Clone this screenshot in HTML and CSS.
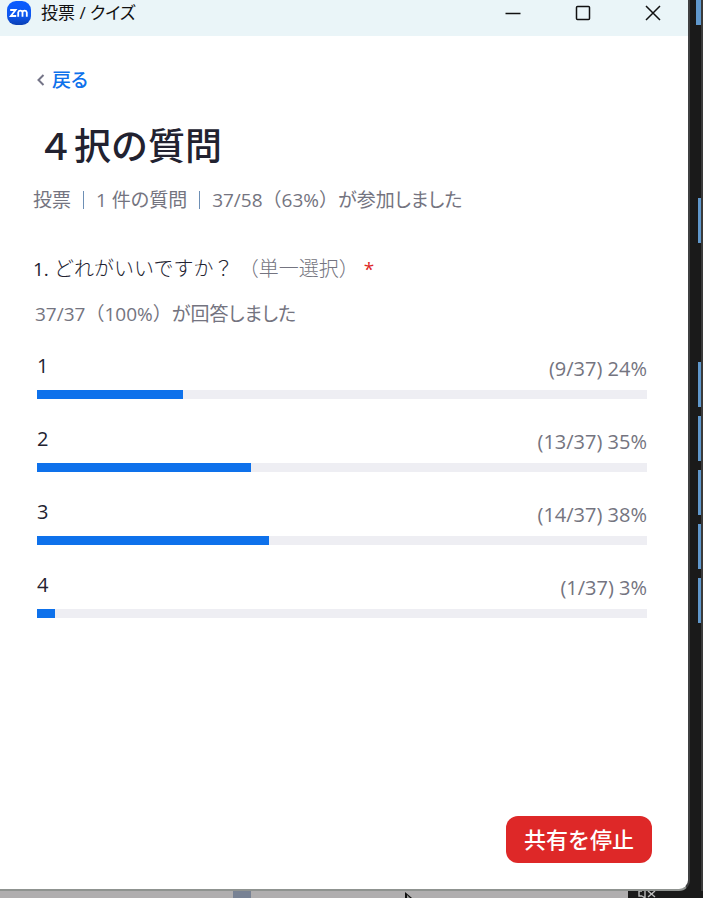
FILE: index.html
```html
<!DOCTYPE html>
<html lang="ja">
<head>
    <meta charset="UTF-8">
    <meta name="viewport" content="width=device-width, initial-scale=1.0">
    <title>投票 / クイズ</title>
    <link rel="stylesheet" href="styles.css">
</head>
<body>
    <div class="window">
        <header class="titlebar">
            <svg class="logo" viewBox="0 0 24 24" aria-hidden="true">
                <defs>
                    <linearGradient id="logo-bg" x1="0" y1="0" x2="0" y2="1">
                        <stop offset="0" stop-color="#0b5cff"/>
                        <stop offset="0.6" stop-color="#0d57f0"/>
                        <stop offset="1" stop-color="#0a3fb4"/>
                    </linearGradient>
                </defs>
                <rect width="24" height="24" rx="9" fill="url(#logo-bg)"/>
                <path d="M3.2 9h5.4L3.8 15h5.4M11.2 15.8v-4.4a2.2 2.2 0 0 1 4.3 0v4.4M15.5 11.4a2.2 2.2 0 0 1 4.3 0v4.4" fill="none" stroke="#fff" stroke-width="1.8"/>
            </svg>
            <span class="window-title">投票 / クイズ</span>
            <div class="window-buttons">
                <button type="button" aria-label="最小化">
                    <svg viewBox="0 0 16 16"><path d="M0.5 8.5h15"/></svg>
                </button>
                <button type="button" aria-label="最大化">
                    <svg viewBox="0 0 16 16"><rect x="1.5" y="1.5" width="13" height="13" rx="1"/></svg>
                </button>
                <button type="button" aria-label="閉じる">
                    <svg viewBox="0 0 16 16"><path d="M1 1l14 14M15 1L1 15"/></svg>
                </button>
            </div>
        </header>

        <main class="content">
            <a class="back" href="#">
                <svg viewBox="0 0 8 12" aria-hidden="true"><path d="M6.5 1L1.5 6l5 5"/></svg>
                戻る
            </a>
            <h1>４択の質問</h1>
            <div class="meta">
                <span>投票</span>
                <span>1 件の質問</span>
                <span>37/58<b>（</b>63%<b>）</b>が参加しました</span>
            </div>

            <section class="question">
                <h2><span class="number">1.</span> どれがいいですか？ <span class="type">（単一選択）</span> <span class="required">*</span></h2>
                <p class="answered">37/37<b>（</b>100%<b>）</b>が回答しました</p>
                <ul class="answers">
                    <li>
                        <div class="row"><span class="label">1</span><span class="count">(9/37) 24%</span></div>
                        <div class="bar"><div class="fill" style="width: 24%"></div></div>
                    </li>
                    <li>
                        <div class="row"><span class="label">2</span><span class="count">(13/37) 35%</span></div>
                        <div class="bar"><div class="fill" style="width: 35%"></div></div>
                    </li>
                    <li>
                        <div class="row"><span class="label">3</span><span class="count">(14/37) 38%</span></div>
                        <div class="bar"><div class="fill" style="width: 38%"></div></div>
                    </li>
                    <li>
                        <div class="row"><span class="label">4</span><span class="count">(1/37) 3%</span></div>
                        <div class="bar"><div class="fill" style="width: 3%"></div></div>
                    </li>
                </ul>
            </section>
        </main>

        <footer class="footer">
            <button type="button" class="stop">共有を停止</button>
        </footer>
    </div>

    <!-- app behind the window -->
    <div class="behind-right">
        <i class="first"></i>
        <i class="second"></i>
        <i class="third"></i>
        <i></i>
        <i></i>
        <i></i>
        <i></i>
    </div>
    <div class="behind-bottom">
        <div class="thumb"></div>
        <svg class="cursor" viewBox="0 0 10 6"><path d="M1 0v6h7z" fill="#111"/><path d="M3 3v3h3z" fill="#999"/></svg>
        <div class="dock">
            <svg viewBox="0 0 18 7"><path d="M4 0H1v5h3M4 5l3 2V0M10 0l7 6M17 0l-7 6" fill="none" stroke="#bbb" stroke-width="1.4"/></svg>
        </div>
    </div>
</body>
</html>
```
FILE: styles.css
```css
* {
    margin: 0;
    padding: 0;
    box-sizing: border-box;
}

body {
    min-height: 100vh;
    display: grid;
    grid-template-columns: 1fr 13px;
    grid-template-rows: 1fr 7px;
    background: #1a1a1a;
    color: #222230;
    font-family: 'Open Sans', 'Noto Sans CJK JP', sans-serif;
    font-size: 19px;
    font-feature-settings: "palt";
}

.window {
    display: flex;
    flex-direction: column;
    background: #fff;
    border-right: 2px solid #3f4041;
    border-bottom: 2px solid #8f9390;
    border-bottom-right-radius: 11px;
}

.titlebar {
    display: flex;
    align-items: center;
    height: 36px;
    padding: 0 20px 10px 7px;
    background: #eaf5f8;
}

.logo {
    width: 24px;
    height: 24px;
}

.window-title {
    flex: 1;
    margin-left: 10px;
    font-size: 17px;
    line-height: 24px;
    color: #111;
}

.window-buttons {
    display: flex;
    gap: 40px;
}

.window-buttons button {
    width: 30px;
    height: 26px;
    border: 0;
    background: none;
}

.window-buttons svg {
    width: 16px;
    height: 16px;
    display: block;
    margin: auto;
    fill: none;
    stroke: #111;
    stroke-width: 1.5;
}

.content {
    flex: 1;
    padding: 29px 41px 0 33px;
}

.back {
    display: inline-flex;
    align-items: center;
    gap: 7px;
    padding-left: 4px;
    line-height: 30px;
    font-weight: 500;
    color: #0e71eb;
    text-decoration: none;
}

.back svg {
    width: 8px;
    height: 12px;
    fill: none;
    stroke: #747487;
    stroke-width: 2;
}

h1 {
    margin-top: 23px;
    padding-left: 4px;
    font-size: 37px;
    line-height: 56px;
    font-weight: 500;
    font-feature-settings: normal;
}

.meta {
    display: flex;
    margin-top: 12px;
    line-height: 28px;
    color: #747480;
}

.meta span + span {
    display: flex;
    align-items: center;
}

.meta span + span::before {
    content: "";
    width: 1px;
    height: 18px;
    margin: 0 12px;
    background: #6d8fb5;
}

/* brackets keep their full width */
b {
    font-weight: inherit;
    font-feature-settings: normal;
}

.question {
    margin-top: 41px;
}

h2 {
    font-size: 20px;
    line-height: 28px;
    font-weight: 300;
    font-feature-settings: normal;
}

.number {
    font-size: 19px;
    font-weight: 400;
}

.type {
    color: #747480;
}

.required {
    color: #de2828;
    font-size: 19px;
    font-weight: 400;
}

.answered {
    margin-top: 17px;
    padding-left: 2px;
    line-height: 28px;
    color: #747480;
}

.answers {
    margin-top: 24px;
    padding-left: 4px;
    list-style: none;
}

.answers li {
    margin-bottom: 26px;
}

.row {
    display: flex;
    justify-content: space-between;
    height: 38px;
    font-size: 20px;
}

.label {
    line-height: 28px;
}

.count {
    line-height: 34px;
    color: #747480;
}

.bar {
    height: 9px;
    background: #eeeef3;
}

.fill {
    height: 100%;
    background: #0e71eb;
}

.footer {
    display: flex;
    justify-content: flex-end;
    padding: 0 36px 26px;
}

.stop {
    height: 47px;
    padding: 0 18px 4px;
    border: 0;
    border-radius: 12px;
    background: #de2828;
    color: #fff;
    font-family: inherit;
    font-size: 22px;
    font-weight: 500;
}

.behind-right {
    display: flex;
    flex-direction: column;
    align-items: flex-end;
    gap: 9px;
    border-right: 2px solid #3a3a3a;
}

.behind-right i {
    width: 3px;
    height: 45px;
    background: #6098cc;
}

.behind-right .first {
    width: 5px;
    height: 25px;
}

.behind-right .second {
    margin-top: 164px;
}

.behind-right .third {
    margin-top: 110px;
}

.behind-bottom {
    grid-column: 1 / -1;
    display: flex;
    background: #b0aeaf;
}

.thumb {
    width: 18px;
    margin-left: 233px;
    background: #788294;
}

.cursor {
    width: 10px;
    height: 6px;
    margin: 1px 0 0 153px;
}

.dock {
    width: 75px;
    margin-left: auto;
    padding-left: 10px;
    background: #1a1a1a;
}

.dock svg {
    width: 18px;
    height: 7px;
    display: block;
}
```
